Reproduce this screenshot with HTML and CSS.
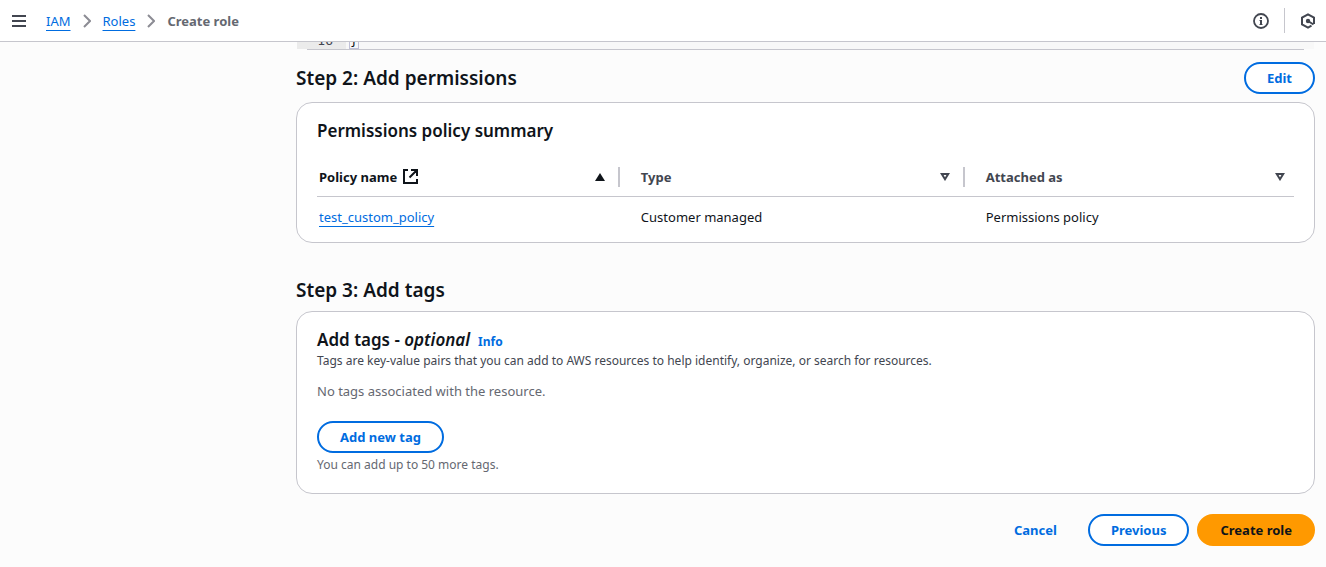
FILE: index.html
```html
<!DOCTYPE html>
<html lang="en">
<head>
<meta charset="utf-8">
<meta name="viewport" content="width=device-width, initial-scale=1">
<title>Create role | IAM</title>
<link rel="stylesheet" href="styles.css">
</head>
<body>
<header class="topbar">
  <button class="icon-btn" type="button" aria-label="Open navigation">
    <svg width="14" height="12" viewBox="0 0 14 12" stroke="#424650" stroke-width="2"><path d="M0 1h14M0 6h14M0 11h14"/></svg>
  </button>
  <nav class="crumbs" aria-label="Breadcrumbs">
    <a class="link" href="#">IAM</a>
    <svg width="8" height="14" viewBox="0 0 8 14" fill="none" stroke="#8c8c94" stroke-width="2"><path d="M1 1l6 6-6 6"/></svg>
    <a class="link" href="#">Roles</a>
    <svg width="8" height="14" viewBox="0 0 8 14" fill="none" stroke="#8c8c94" stroke-width="2"><path d="M1 1l6 6-6 6"/></svg>
    <span class="current">Create role</span>
  </nav>
  <div class="tools">
    <button class="icon-btn" type="button" aria-label="Info panel">
      <svg width="16" height="16" viewBox="0 0 16 16" fill="none" stroke="#424650"><circle cx="8" cy="8" r="7" stroke-width="1.800"/><path d="M8 4v2" stroke-width="2"/><path d="M6.500 7.500H8V11M6.500 11.500h3" stroke-width="1"/><path d="M8 7v5" stroke-width="2"/></svg>
    </button>
    <span class="divider"></span>
    <button class="icon-btn" type="button" aria-label="Diagnostics">
      <svg width="16" height="16" viewBox="0 0 16 16" fill="none" stroke="#424650" stroke-width="2"><path d="M14 11V4.700L8 1.300 2 4.700v6.600L8 14.700l3.500-2"/><circle cx="8" cy="8" r="2.200" fill="#424650" stroke="none"/><path d="M8 8l5.500 3.500"/></svg>
    </button>
  </div>
</header>
<main class="content">
  <div class="editor">
    <div class="editor-line"><span class="gutter">16</span><span class="brace">}</span></div>
  </div>
  <hr class="editor-edge">
  <section class="step">
    <div class="step-head">
      <h2>Step 2: Add permissions</h2>
      <button class="btn" type="button">Edit</button>
    </div>
    <div class="card card-table">
      <h3>Permissions policy summary</h3>
      <table>
        <colgroup><col class="col-name"><col class="col-type"><col class="col-as"></colgroup>
        <thead>
          <tr>
            <th scope="col" class="sorted"><div class="th">
              <span class="label">Policy name <svg width="15" height="15" viewBox="0 0 15 15" fill="none" stroke="#0f141a" stroke-width="2"><path d="M5 1H1v13h13v-4M8 1h6v6M14 1L6.500 8.500"/></svg></span>
              <svg width="10" height="8" viewBox="0 0 10 8" fill="#0f141a"><path d="M5 0l5 8H0z"/></svg>
            </div></th>
            <th scope="col"><div class="th">
              <span class="label">Type</span>
              <svg width="10" height="8" viewBox="0 0 10 8" fill="none" stroke="#424650" stroke-width="2"><path d="M1.800 1h6.400L5 6.200z"/></svg>
            </div></th>
            <th scope="col"><div class="th">
              <span class="label">Attached as</span>
              <svg width="10" height="8" viewBox="0 0 10 8" fill="none" stroke="#424650" stroke-width="2"><path d="M1.800 1h6.400L5 6.200z"/></svg>
            </div></th>
          </tr>
        </thead>
        <tbody>
          <tr>
            <td><a class="link" href="#">test_custom_policy</a></td>
            <td>Customer managed</td>
            <td>Permissions policy</td>
          </tr>
        </tbody>
      </table>
    </div>
  </section>
  <section class="step">
    <h2>Step 3: Add tags</h2>
    <div class="card card-tags">
      <div class="title-row">
        <h3>Add tags - <em>optional</em></h3>
        <a class="info" href="#">Info</a>
      </div>
      <p class="desc">Tags are key-value pairs that you can add to AWS resources to help identify, organize, or search for resources.</p>
      <p class="empty">No tags associated with the resource.</p>
      <button class="btn" type="button">Add new tag</button>
      <p class="hint">You can add up to 50 more tags.</p>
    </div>
  </section>
  <div class="actions">
    <button class="btn btn-link" type="button">Cancel</button>
    <button class="btn" type="button">Previous</button>
    <button class="btn btn-primary" type="button">Create role</button>
  </div>
</main>
</body>
</html>
```
FILE: styles.css
```css
* { box-sizing: border-box; }
body {
  margin: 0;
  background: #fcfcfc;
  color: #0f141a;
  font: 13px/20px "Noto Sans", "Open Sans", sans-serif;
}
h2, h3, p { margin: 0; }
svg { flex: none; }
h2 { font-size: 19px; line-height: 25px; font-weight: 600; }
h3 { font-size: 17px; line-height: 24px; font-weight: 600; }
.link {
  color: #006ce0;
  text-decoration: underline;
  text-decoration-thickness: 1px;
  text-underline-offset: 4px;
}
.topbar {
  display: flex;
  align-items: center;
  height: 42px;
  padding: 0 10px 0 12px;
  background: #fff;
  border-bottom: 1px solid #c6c6cd;
}
.icon-btn {
  display: flex;
  padding: 0;
  border: 0;
  background: none;
}
.crumbs {
  display: flex;
  align-items: center;
  gap: 12px;
  margin-left: 20px;
}
.current { color: #656871; font-weight: 700; }
.tools {
  display: flex;
  align-items: center;
  gap: 15px;
  margin-left: auto;
}
.divider { width: 1px; height: 25px; background: #c6c6cd; }
.content { padding: 0 11px 20px 296px; }
.editor {
  display: flex;
  align-items: flex-end;
  height: 7px;
  margin: 0 1px;
  overflow: hidden;
  background: #f8f8f8;
}
.editor-line {
  display: flex;
  font: 13px/16px "DejaVu Sans Mono", monospace;
}
.editor-edge {
  height: 1px;
  margin: 0 11px 12px;
  border: 0;
  background: #c6c6cd;
}
.gutter {
  width: 49px;
  padding-right: 13px;
  background: #ebebeb;
  color: #424650;
  text-align: right;
}
.brace { margin-left: 3px; border: 1px solid #c0c0d8; line-height: 14px; }
.step { margin-bottom: 35px; }
.step:last-of-type { margin-bottom: 20px; }
.step-head {
  display: flex;
  align-items: center;
  justify-content: space-between;
}
.card {
  margin-top: 8px;
  padding: 16px 20px;
  background: #fff;
  border: 1px solid #c6c6cd;
  border-radius: 16px;
}
.card-table { padding-bottom: 5px; }
.card-tags { padding-bottom: 19px; }
.btn {
  height: 32px;
  padding: 0 21px;
  border: 2px solid #006ce0;
  border-radius: 16px;
  background: #fff;
  color: #006ce0;
  font: inherit;
  font-weight: 700;
}
.btn-link { border-color: transparent; background: none; }
.btn-primary { border-color: #ff9900; background: #ff9900; color: #0f141a; }
table {
  width: 100%;
  margin-top: 14px;
  border-collapse: separate;
  border-spacing: 0;
  table-layout: fixed;
}
.col-name { width: 31%; }
.col-type { width: 35.300%; }
th {
  height: 40px;
  padding: 0;
  border-bottom: 1px solid #c6c6cd;
  color: #424650;
  font-weight: 700;
  text-align: left;
}
.th {
  display: flex;
  align-items: center;
  justify-content: space-between;
  height: 20px;
  padding: 0 13px 0 21px;
  border-right: 2px solid #c6c6cd;
}
th:first-child .th, td:first-child { padding-left: 2px; }
th:last-child .th { padding-right: 9px; border-right: 0; }
.sorted { color: #0f141a; }
.label { display: flex; align-items: center; gap: 6px; }
td { height: 40px; padding: 0 0 0 21px; }
.title-row { display: flex; align-items: baseline; gap: 8px; }
.info { color: #006ce0; font-size: 12px; font-weight: 700; text-decoration: none; }
.desc, .hint { font-size: 12px; line-height: 18px; }
.desc { color: #424650; }
.empty { margin: 11px 0 20px; color: #656871; }
.hint { margin-top: 3px; color: #656871; }
.actions {
  display: flex;
  justify-content: flex-end;
  gap: 8px;
}
```
